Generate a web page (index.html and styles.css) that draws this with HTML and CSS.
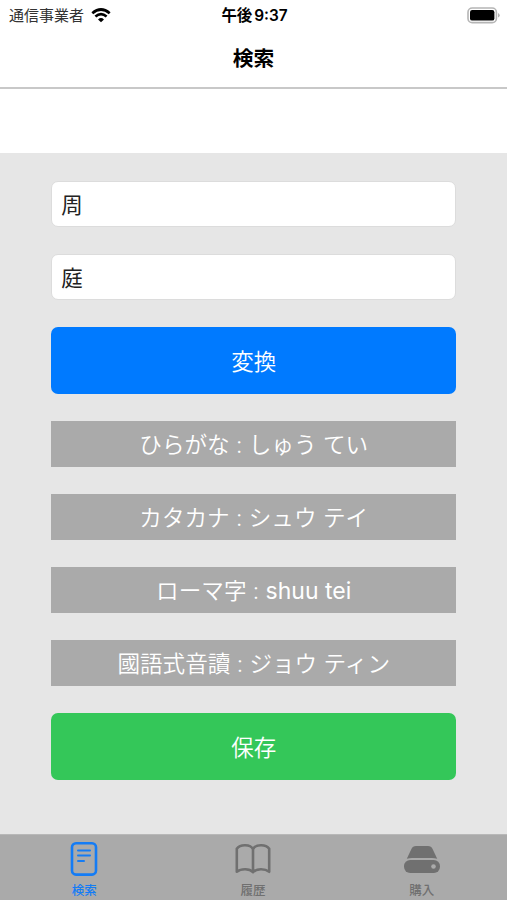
FILE: index.html
```html
<!DOCTYPE html>
<html lang="ja">
  <head>
    <meta charset="UTF-8" />
    <meta name="viewport" content="width=device-width, initial-scale=1.0" />
    <title>検索</title>
    <link rel="stylesheet" href="styles.css">
  </head>
  <body>
    <header>
      <div class="status">
        <div class="carrier">
          <span>通信事業者</span>
          <svg class="wifi" width="20" height="15" viewBox="0 0 20 15">
            <path d="M1.3 5.3Q10 -2.3 18.7 5.3" fill="none" stroke="#000" stroke-width="2.7" />
            <path d="M4.4 8.6Q10 3.7 15.6 8.6" fill="none" stroke="#000" stroke-width="2.6" />
            <path d="M7 11.4Q10 8.6 13 11.4L10 14.3Z" fill="#000" />
          </svg>
        </div>
        <time>午後<span>9:37</span></time>
        <svg class="battery" width="34" height="17" viewBox="0 0 34 17">
          <rect x="2" y="1" width="28.4" height="14.6" rx="4.2" fill="none" stroke="#b5b5b5" stroke-width="1.6" />
          <rect x="4" y="3" width="24.4" height="10.6" rx="2.2" fill="#000" />
          <path d="M32 6v4.6q1.7-.7 1.7-2.3T32 6z" fill="#b5b5b5" />
        </svg>
      </div>
      <h1>検索</h1>
    </header>

    <main>
      <input class="felt" type="text" value="周" />
      <input class="felt" type="text" value="庭" />
      <button class="convert">変換</button>
      <p class="result">ひらがな : しゅう てい</p>
      <p class="result">カタカナ : シュウ テイ</p>
      <p class="result">ローマ字 : <span class="latin">shuu tei</span></p>
      <p class="result">國語式音讀 : ジョウ ティン</p>
      <button class="save">保存</button>
    </main>

    <nav>
      <a class="tab selected">
        <svg width="38" height="36" viewBox="0 0 38 36">
          <rect x="7" y="2.2" width="24" height="31.4" rx="4" fill="none" stroke="currentColor" stroke-width="2.6" />
          <path d="M13 9.5h12M13 14.6h12M13 19.9h6" fill="none" stroke="currentColor" stroke-width="2" stroke-linecap="round" />
        </svg>
        <span>検索</span>
      </a>
      <a class="tab">
        <svg width="38" height="36" viewBox="0 0 38 36">
          <path d="M19 8.2C16.5 3.1 6 3.1 2.8 7.8V30.8C7 27.5 15.5 27.3 19 31.2C22.5 27.3 31 27.5 35.2 30.8V7.8C32 3.1 21.500 3.1 19 8.2V31" fill="none" stroke="currentColor" stroke-width="2.6" stroke-linejoin="round" />
        </svg>
        <span>履歴</span>
      </a>
      <a class="tab">
        <svg width="38" height="36" viewBox="0 0 38 36">
          <path d="M3.800 17.800L8.300 8.200Q9.700 5 13 5H25Q28.300 5 29.700 8.200L34.200 17.800Q31.500 17 29 17H9Q6.500 17 3.800 17.800Z" fill="currentColor" />
          <rect x="1" y="19" width="36" height="13" rx="6.200" fill="currentColor" />
          <circle cx="30.500" cy="25.500" r="2.300" fill="#aaa" />
        </svg>
        <span>購入</span>
      </a>
    </nav>
  </body>
</html>
```
FILE: styles.css
```css
* {
  box-sizing: border-box;
  margin: 0;
  padding: 0;
}
body {
  display: flex;
  flex-direction: column;
  height: 900px;
  background-color: #e6e6e6;
  font-family: Inter, "Noto Sans CJK JP", sans-serif;
  overflow: hidden;
}
header {
  height: 153.4px;
  background-color: #fff;
}
.status {
  display: grid;
  grid-template-columns: 1fr auto 1fr;
  align-items: center;
  height: 29px;
  padding: 0 7px 0 9px;
  font-size: 15px;
  line-height: 29px;
}
.carrier {
  display: flex;
  align-items: center;
  gap: 7px;
  color: #333;
}
.carrier span,
.status time {
  padding-top: 1px;
}
.status time {
  font-weight: 600;
  font-size: 15.4px;
}
.status time span {
  margin-left: 2px;
}
.battery {
  justify-self: end;
}
h1 {
  height: 60px;
  border-bottom: 2px solid #c8c8c8;
  font-size: 20.8px;
  font-weight: 700;
  line-height: 59px;
  text-align: center;
}
main {
  flex: 1;
  display: flex;
  flex-direction: column;
  gap: 27px;
  padding: 28px 50.8px 0 51.2px;
}
.felt {
  height: 45.9px;
  padding: 0 9px 2px;
  border: 1px solid #dcdcdc;
  border-radius: 7px;
  background-color: #fff;
  color: #222;
  font-family: inherit;
  font-size: 21.5px;
}
button {
  height: 67.2px;
  padding-bottom: 1px;
  border: none;
  border-radius: 7px;
  color: #fff;
  font-family: inherit;
  font-size: 22.5px;
  font-weight: 350;
}
.convert {
  background-color: #007aff;
}
.save {
  background-color: #34c759;
}
.result {
  height: 45.9px;
  background-color: #aaa;
  color: #fff;
  font-size: 22.6px;
  font-weight: 350;
  line-height: 47px;
  text-align: center;
}
.latin {
  font-size: 23px;
  font-weight: 400;
}
nav {
  display: grid;
  grid-template-columns: repeat(3, 1fr);
  height: 66px;
  padding-right: 1px;
  border-top: 1px solid #b8b8b8;
  background-color: #aaa;
}
.tab {
  display: flex;
  flex-direction: column;
  align-items: center;
  padding-top: 6px;
  color: #707070;
  font-size: 12.5px;
  font-weight: 500;
  line-height: 27px;
}
.selected {
  color: #147cf5;
}
```
